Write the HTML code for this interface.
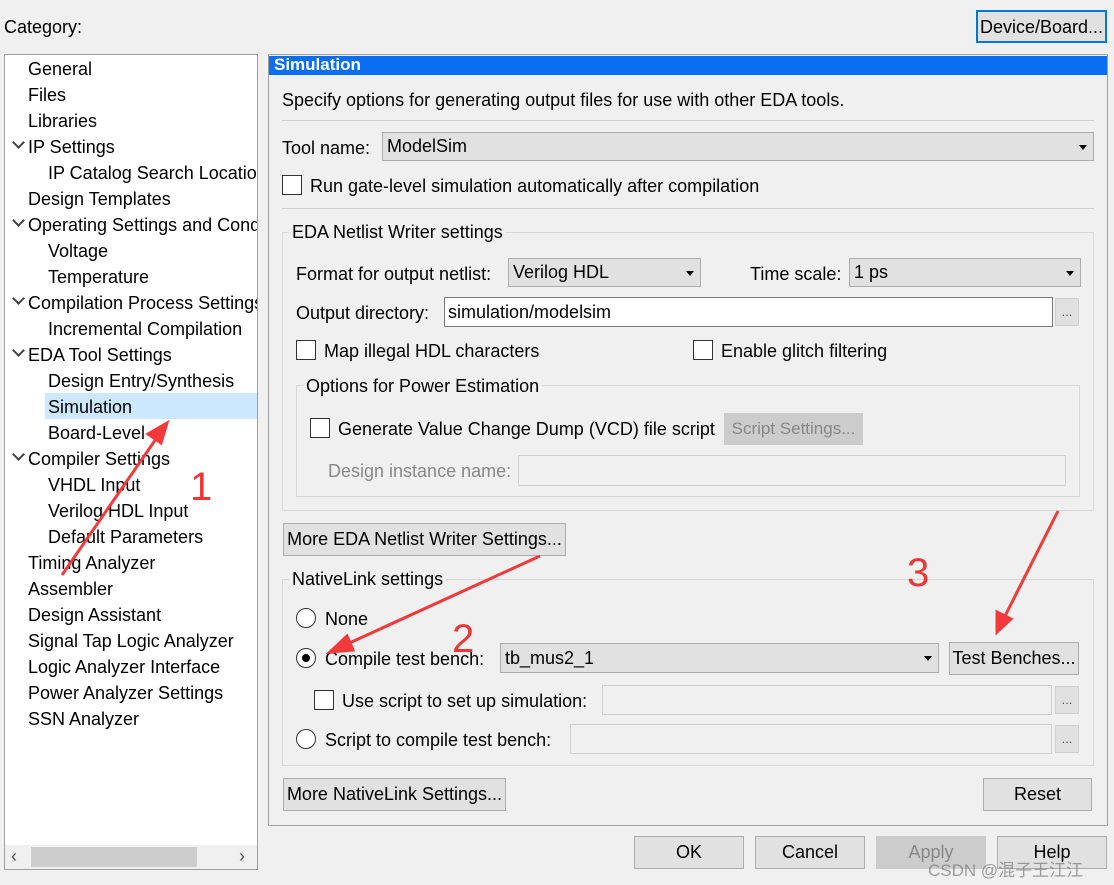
<!DOCTYPE html>
<html><head><meta charset="utf-8"><style>
*{box-sizing:border-box;margin:0;padding:0}
body{width:1114px;height:885px;background:#f0f0f0;font-family:"Liberation Sans","Noto Sans CJK SC",sans-serif;font-size:18px;color:#000;position:relative;overflow:hidden}
.a{position:absolute;white-space:nowrap}
.box{position:absolute;border:1px solid #a0a0a0}
.btn{position:absolute;background:#e1e1e1;border:1px solid #adadad;text-align:center;white-space:nowrap}
.cb{position:absolute;width:20px;height:20px;background:#fff;border:1px solid #333}
.combo{position:absolute;background:#e1e1e1;border:1px solid #adadad;padding-left:4px;white-space:nowrap}
.combo:after{content:"";position:absolute;right:6px;top:50%;margin-top:-2px;border-left:4px solid transparent;border-right:4px solid transparent;border-top:5px solid #000}
.inp{position:absolute;background:#fff;border:1px solid #7a7a7a;padding-left:3px}
.dis{position:absolute;background:#f0f0f0;border:1px solid #d0d0d0}
.dot{position:absolute;background:#e1e1e1;border:1px solid #cfcfcf;color:#555;text-align:center;font-size:13px}
.grp{position:absolute;border:1px solid #d8d8d8}
.lg{position:absolute;background:#f0f0f0;padding:0 3px;white-space:nowrap}
.chev{position:absolute;left:9px;width:9px;height:9px;border-right:2.5px solid #444;border-bottom:2.5px solid #444;transform:rotate(45deg)}
.rad{position:absolute;width:20px;height:20px;border-radius:50%;border:1px solid #333;background:#fff}
</style></head><body>
<div class="a" style="left:4px;top:17px">Category:</div>
<div class="btn" style="left:976px;top:10px;width:131px;height:33px;line-height:31px;border:2px solid #0078d7">Device/Board...</div>

<div class="box" style="left:4px;top:54px;width:254px;height:816px;background:#fff;overflow:hidden">
<div style="position:absolute;left:40px;top:338px;width:214px;height:26px;background:#cce8ff"></div>
<div class="a" style="left:23px;top:4px">General</div>
<div class="a" style="left:23px;top:30px">Files</div>
<div class="a" style="left:23px;top:56px">Libraries</div>
<div class="chev" style="top:83px"></div><div class="a" style="left:23px;top:82px">IP Settings</div>
<div class="a" style="left:43px;top:108px">IP Catalog Search Locations</div>
<div class="a" style="left:23px;top:134px">Design Templates</div>
<div class="chev" style="top:161px"></div><div class="a" style="left:23px;top:160px">Operating Settings and Conditions</div>
<div class="a" style="left:43px;top:186px">Voltage</div>
<div class="a" style="left:43px;top:212px">Temperature</div>
<div class="chev" style="top:239px"></div><div class="a" style="left:23px;top:238px">Compilation Process Settings</div>
<div class="a" style="left:43px;top:264px">Incremental Compilation</div>
<div class="chev" style="top:291px"></div><div class="a" style="left:23px;top:290px">EDA Tool Settings</div>
<div class="a" style="left:43px;top:316px">Design Entry/Synthesis</div>
<div class="a" style="left:43px;top:342px">Simulation</div>
<div class="a" style="left:43px;top:368px">Board-Level</div>
<div class="chev" style="top:395px"></div><div class="a" style="left:23px;top:394px">Compiler Settings</div>
<div class="a" style="left:43px;top:420px">VHDL Input</div>
<div class="a" style="left:43px;top:446px">Verilog HDL Input</div>
<div class="a" style="left:43px;top:472px">Default Parameters</div>
<div class="a" style="left:23px;top:498px">Timing Analyzer</div>
<div class="a" style="left:23px;top:524px">Assembler</div>
<div class="a" style="left:23px;top:550px">Design Assistant</div>
<div class="a" style="left:23px;top:576px">Signal Tap Logic Analyzer</div>
<div class="a" style="left:23px;top:602px">Logic Analyzer Interface</div>
<div class="a" style="left:23px;top:628px">Power Analyzer Settings</div>
<div class="a" style="left:23px;top:654px">SSN Analyzer</div>
<div style="position:absolute;left:0;top:790px;width:254px;height:24px;background:#f0f0f0"></div>
<div style="position:absolute;left:26px;top:792px;width:166px;height:20px;background:#cdcdcd"></div>
<div class="a" style="left:6px;top:791px;color:#555">‹</div><div class="a" style="left:234px;top:791px;color:#555">›</div>
</div>

<div class="box" style="left:268px;top:54px;width:840px;height:772px"></div>
<div style="position:absolute;left:269px;top:56px;width:838px;height:19px;background:#0a6ef0"></div>
<div class="a" style="left:274px;top:55px;color:#fff;font-weight:bold;font-size:17px">Simulation</div>
<div class="a" style="left:282px;top:90px">Specify options for generating output files for use with other EDA tools.</div>
<div style="position:absolute;left:282px;top:120px;width:812px;height:1px;background:#d0d0d0"></div>
<div class="a" style="left:282px;top:138px">Tool name:</div>
<div class="combo" style="left:382px;top:132px;width:712px;height:29px;line-height:27px">ModelSim</div>
<div class="cb" style="left:282px;top:175px"></div>
<div class="a" style="left:310px;top:176px">Run gate-level simulation automatically after compilation</div>
<div style="position:absolute;left:282px;top:208px;width:812px;height:1px;background:#d0d0d0"></div>

<div class="grp" style="left:282px;top:232px;width:812px;height:279px"></div>
<div class="lg" style="left:289px;top:222px">EDA Netlist Writer settings</div>
<div class="a" style="left:296px;top:264px">Format for output netlist:</div>
<div class="combo" style="left:508px;top:258px;width:193px;height:29px;line-height:27px">Verilog HDL</div>
<div class="a" style="left:750px;top:264px">Time scale:</div>
<div class="combo" style="left:849px;top:258px;width:232px;height:29px;line-height:27px">1 ps</div>
<div class="a" style="left:296px;top:303px">Output directory:</div>
<div class="inp" style="left:444px;top:297px;width:609px;height:30px;line-height:28px">simulation/modelsim</div>
<div class="dot" style="left:1055px;top:298px;width:24px;height:28px;line-height:26px">...</div>
<div class="cb" style="left:296px;top:340px"></div>
<div class="a" style="left:324px;top:341px">Map illegal HDL characters</div>
<div class="cb" style="left:693px;top:340px"></div>
<div class="a" style="left:721px;top:341px">Enable glitch filtering</div>
<div class="grp" style="left:296px;top:385px;width:784px;height:112px"></div>
<div class="lg" style="left:303px;top:376px">Options for Power Estimation</div>
<div class="cb" style="left:310px;top:418px"></div>
<div class="a" style="left:338px;top:419px">Generate Value Change Dump (VCD) file script</div>
<div class="btn" style="left:724px;top:413px;width:139px;height:32px;line-height:30px;color:#888;background:#ccc;border-color:#ccc;font-size:17px">Script Settings...</div>
<div class="a" style="left:328px;top:461px;color:#888">Design instance name:</div>
<div class="dis" style="left:518px;top:455px;width:548px;height:31px"></div>

<div class="btn" style="left:283px;top:523px;width:283px;height:33px;line-height:31px">More EDA Netlist Writer Settings...</div>

<div class="grp" style="left:282px;top:579px;width:812px;height:187px"></div>
<div class="lg" style="left:289px;top:569px">NativeLink settings</div>
<div class="rad" style="left:296px;top:608px"></div>
<div class="a" style="left:325px;top:609px">None</div>
<div class="rad" style="left:296px;top:648px"></div><div style="position:absolute;left:302px;top:654px;width:8px;height:8px;border-radius:50%;background:#000"></div>
<div class="a" style="left:325px;top:649px">Compile test bench:</div>
<div class="combo" style="left:500px;top:643px;width:439px;height:30px;line-height:28px">tb_mus2_1</div>
<div class="btn" style="left:949px;top:642px;width:130px;height:33px;line-height:31px">Test Benches...</div>
<div class="cb" style="left:314px;top:690px"></div>
<div class="a" style="left:342px;top:691px">Use script to set up simulation:</div>
<div class="dis" style="left:602px;top:685px;width:450px;height:30px"></div>
<div class="dot" style="left:1055px;top:686px;width:24px;height:28px;line-height:26px">...</div>
<div class="rad" style="left:296px;top:729px"></div>
<div class="a" style="left:325px;top:730px">Script to compile test bench:</div>
<div class="dis" style="left:570px;top:724px;width:482px;height:30px"></div>
<div class="dot" style="left:1055px;top:725px;width:24px;height:28px;line-height:26px">...</div>

<div class="btn" style="left:283px;top:778px;width:223px;height:33px;line-height:31px">More NativeLink Settings...</div>
<div class="btn" style="left:983px;top:778px;width:109px;height:33px;line-height:31px">Reset</div>

<div class="btn" style="left:634px;top:836px;width:110px;height:33px;line-height:31px">OK</div>
<div class="btn" style="left:755px;top:836px;width:110px;height:33px;line-height:31px">Cancel</div>
<div class="btn" style="left:876px;top:836px;width:110px;height:33px;line-height:31px;color:#888;background:#ccc;border-color:#ccc">Apply</div>
<div class="btn" style="left:997px;top:836px;width:110px;height:33px;line-height:31px">Help</div>
<div class="a" style="left:928px;top:856px;color:rgba(120,120,120,.7);font-size:17px">CSDN @混子王江江</div>

<svg style="position:absolute;left:0;top:0" width="1114" height="885">
<g stroke="#f23a3a" stroke-width="3" fill="#f23a3a">
<line x1="62" y1="575" x2="158" y2="436"/><polygon points="167,423 148,434 161,443" />
<line x1="540" y1="556" x2="345" y2="645"/><polygon points="330,652 347,636 353,650"/>
<line x1="1058" y1="511" x2="1003" y2="620"/><polygon points="997,632 997,612 1011,619"/>
</g>
<g fill="#f03535" font-family="Liberation Sans,sans-serif" font-size="40">
<text x="190" y="500">1</text><text x="452" y="652">2</text><text x="907" y="586">3</text>
</g>
</svg>
</body></html>
